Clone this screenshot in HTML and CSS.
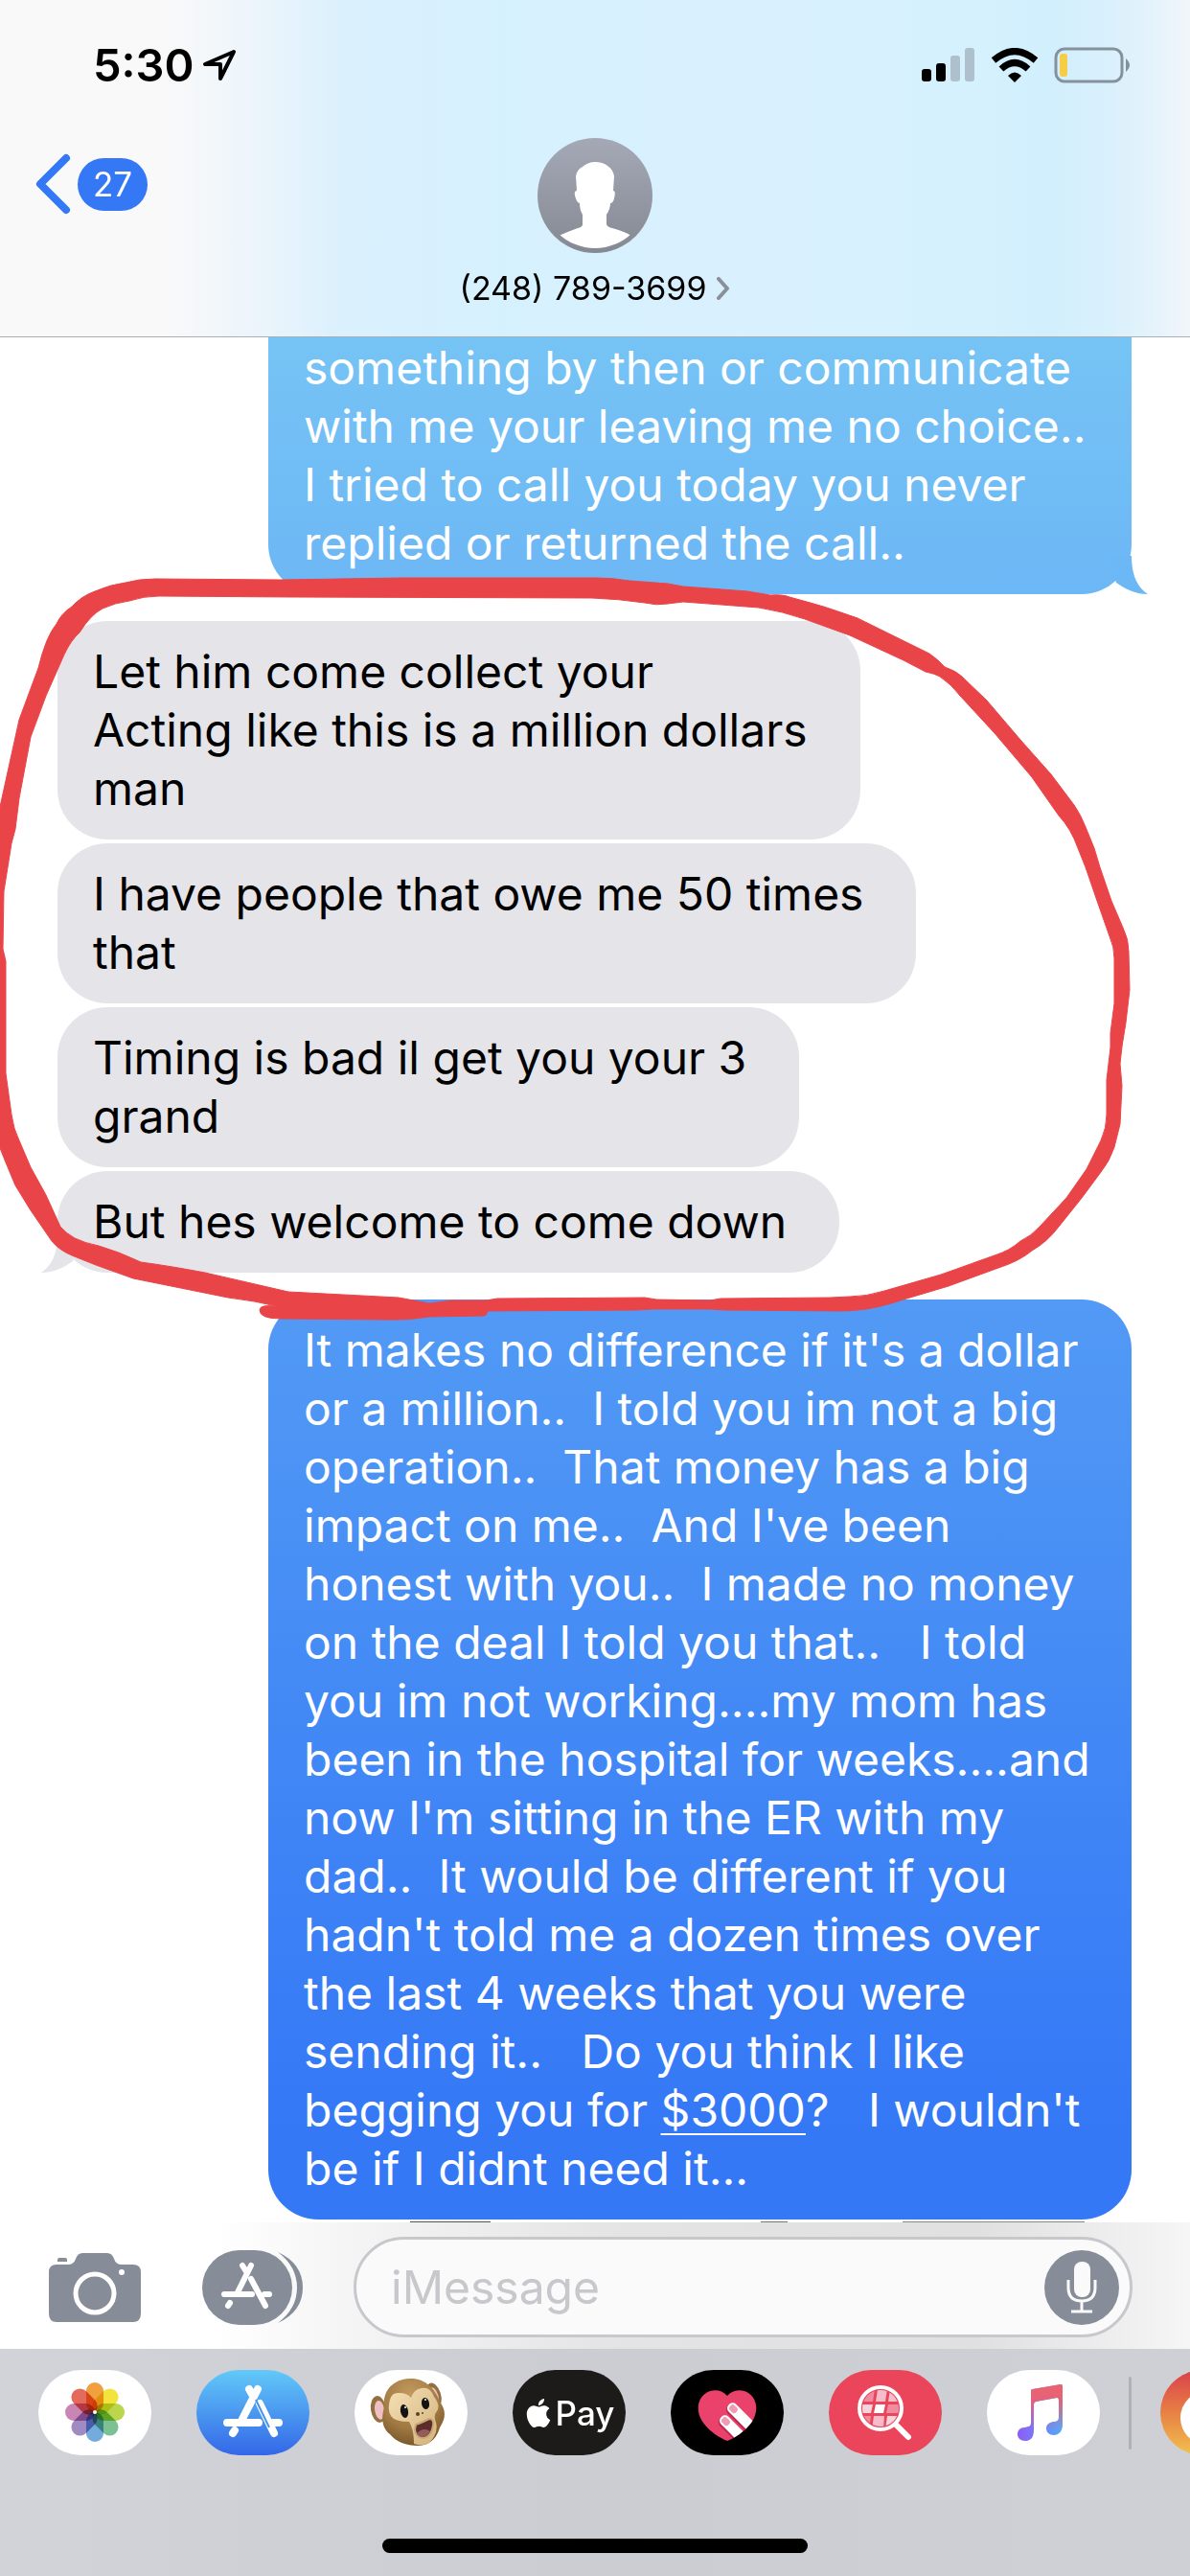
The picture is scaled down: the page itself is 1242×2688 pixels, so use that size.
FILE: index.html
```html
<!DOCTYPE html>
<html lang="en">
<head>
<meta charset="UTF-8">
<meta name="viewport" content="width=device-width, initial-scale=1">
<title>Messages</title>
<link rel="stylesheet" href="styles.css">
</head>
<body>
<header class="header">
	<div class="status">
		<span class="time">5:30</span>
		<svg class="location" width="36" height="34" viewBox="0 0 36 34"><path d="M33 3 L3 16 H19 V31 Z" fill="none" stroke="#000" stroke-width="4" stroke-linejoin="round"/></svg>
		<svg class="signal" width="56" height="36" viewBox="0 0 56 36">
			<rect x="0" y="22" width="10" height="13" rx="3"/>
			<rect x="15" y="16" width="10" height="19" rx="3"/>
			<rect x="30" y="8" width="10" height="27" rx="3" fill="#adc0cc"/>
			<rect x="45" y="0" width="10" height="35" rx="3" fill="#adc0cc"/>
		</svg>
		<svg class="wifi" width="50" height="36" viewBox="0 0 50 36">
			<path d="M3 13 Q25 -6 47 13" fill="none" stroke="#000" stroke-width="7"/>
			<path d="M11 22 Q25 9 39 22" fill="none" stroke="#000" stroke-width="7"/>
			<path d="M18 29 Q25 22 32 29 L25 36 Z"/>
		</svg>
		<svg class="battery" width="80" height="38" viewBox="0 0 80 38">
			<rect x="2" y="2" width="69" height="34" rx="9" fill="none" stroke="#84929c" stroke-width="3"/>
			<rect x="6" y="7" width="8" height="24" rx="3" fill="#f7cd45"/>
			<path d="M75 12 Q83 19 75 26 Z" fill="#84929c"/>
		</svg>
	</div>
	<nav class="nav">
		<a class="back" href="#" aria-label="Back">
			<svg width="38" height="64" viewBox="0 0 38 64"><path d="M33 5 L6 32 L33 59" fill="none" stroke="#3478f6" stroke-width="8" stroke-linecap="round" stroke-linejoin="round"/></svg>
			<span class="unread">27</span>
		</a>
		<a class="contact" href="#">
			<svg width="121" height="121" viewBox="0 0 121 121">
				<defs>
					<linearGradient id="avatarBg" x1="0" y1="0" x2="0" y2="1"><stop offset="0" stop-color="#a5a9b6"/><stop offset="1" stop-color="#858993"/></linearGradient>
					<clipPath id="avatarClip"><circle cx="60" cy="60" r="55"/></clipPath>
				</defs>
				<circle cx="60" cy="60" r="60" fill="url(#avatarBg)"/>
				<path clip-path="url(#avatarClip)" fill="#fff" d="M60 25 C70 25 79 31 80 40 L79 55 Q82 55 80 63 Q79 68 76 68 Q76 74 72 80 V90 Q73 93 78 94 Q92 98 98 102 V121 H22 V102 Q31 98 42 94 Q47 93 47 90 V80 Q44 75 44 68 Q41 68 39 60 Q38 55 41 55 L40 40 Q41 33 47 30 Q53 25 60 25 Z"/>
			</svg>
			<span class="name">(248) 789-3699
				<svg width="15" height="24" viewBox="0 0 15 24"><path d="M3 2 L12 12 L3 22" fill="none" stroke="#8a8f99" stroke-width="4" stroke-linecap="round" stroke-linejoin="round"/></svg>
			</span>
		</a>
	</nav>
</header>

<main class="chat">
	<div class="bubble sent cut"><p class="text">something by then or communicate
with me your leaving me no choice..
I tried to call you today you never
replied or returned the call..</p>
		<svg class="tail tail-right" width="44" height="40" viewBox="0 0 44 40"><path d="M23 0 C23 20 29 33 40 40 C26 40 16 34 7 28 L0 0 Z" fill="#6cb7f5"/></svg>
	</div>
	<div class="group">
		<div class="bubble received"><p class="text">Let him come collect your
Acting like this is a million dollars
man</p></div>
		<div class="bubble received"><p class="text">I have people that owe me 50 times
that</p></div>
		<div class="bubble received"><p class="text">Timing is bad il get you your 3
grand</p></div>
		<div class="bubble received"><p class="text">But hes welcome to come down</p>
			<svg class="tail tail-left" width="44" height="40" viewBox="0 0 44 40"><path d="M21 0 C21 20 15 33 4 40 C18 40 28 34 37 28 L44 0 Z" fill="#e5e4e9"/></svg>
		</div>
	</div>
	<div class="bubble sent long"><p class="text">It makes no difference if it's a dollar
or a million..  I told you im not a big
operation..  That money has a big
impact on me..  And I've been
honest with you..  I made no money
on the deal I told you that..   I told
you im not working....my mom has
been in the hospital for weeks....and
now I'm sitting in the ER with my
dad..  It would be different if you
hadn't told me a dozen times over
the last 4 weeks that you were
sending it..   Do you think I like
begging you for <a class="amount" href="#">$3000</a>?   I wouldn't
be if I didnt need it...</p></div>
	<div class="next"></div>

	<!-- hand drawn ring round the received messages -->
	<svg class="ring" width="1242" height="800" viewBox="0 590 1242 800">
		<path fill="#e94549" fill-rule="evenodd" stroke="#e94549" stroke-width="1" stroke-linejoin="round" d="M-4 860 L0 842 L9 801 L20 751 L40 697 Q48 664 59 651 Q64 640 75 633 Q85 622 99 617 Q115 610 131 608 Q145 604 162 604 L293 605 L420 603 H622 Q640 603 657 606 L697 609 L713 612 L780 617 L804 621 Q817 620 824 623 Q860 632 895 645 L970 682 Q979 688 986 696 Q998 700 1004 706 L1030 731 L1065 772 L1097 808 L1121 840 Q1128 850 1133 863 L1142 885 L1148 905 L1160 940 L1172 968 Q1178 980 1178 993 L1179 1033 L1175 1067 L1171 1092 L1169 1110 L1171 1133 L1169 1173 L1163 1197 Q1158 1212 1149 1223 L1129 1250 L1105 1280 Q1093 1296 1077 1305 Q1064 1316 1042 1323 L990 1342 L943 1356 Q913 1366 895 1367 Q888 1368 879 1368 L756 1367 L741 1366 H681 L665 1367 L509 1368 Q508 1373 505 1373 L448 1374 Q426 1378 404 1377 L293 1376 Q271 1376 271 1367 Q271 1360 293 1364 Q265 1357 238 1354 L139 1334 L100 1320 L75 1310 Q61 1304 54 1295 L32 1263 L16 1237 L6 1213 L0 1198 L-4 1190 Z
		M12 880 L16 865 L20 833 L26 801 L32 769 L48 726 L67 683 Q74 668 83 660 Q95 641 107 635 Q120 629 135 627 Q150 622 166 622 L305 623 L618 624 Q646 625 673 629 Q685 632 697 630 L713 628 L792 634 Q817 638 840 646 L887 663 L943 689 L966 701 Q976 703 981 706 Q993 714 1002 726 L1038 765 L1077 811 L1105 851 Q1118 865 1125 885 L1133 905 L1145 940 L1158 977 Q1163 988 1163 1000 V1047 L1159 1078 V1093 L1155 1127 V1163 Q1155 1177 1149 1190 L1134 1220 L1113 1250 L1085 1280 Q1076 1290 1065 1295 Q1054 1305 1038 1310 L982 1330 L923 1347 Q904 1353 887 1353 L867 1354 L752 1355 L741 1357 L685 1356 L673 1354 L519 1355 L507 1357 H471 L448 1360 L416 1354 L301 1348 L214 1328 Q177 1321 147 1317 Q124 1306 103 1300 Q88 1297 78 1292 Q69 1287 63 1280 L48 1247 L32 1218 L20 1190 Q14 1178 12 1163 L6 1120 V1003 L3 990 L4 930 Z"/>
	</svg>
</main>

<form class="composer">
	<button class="tool" type="button" aria-label="Camera">
		<svg width="96" height="72" viewBox="0 0 96 72">
			<path fill="#878d98" d="M9 9 V7 Q9 5 11 5 H17 Q19 5 19 7 V9 Z"/>
			<path fill="#878d98" d="M8 12 H20 Q26 12 28 6 Q30 0 35 0 H61 Q66 0 68 6 Q70 12 76 12 H88 Q96 12 96 20 V63 Q96 72 88 72 H8 Q0 72 0 63 V20 Q0 12 8 12 Z"/>
			<circle cx="48" cy="42" r="20" fill="none" stroke="#fff" stroke-width="5"/>
			<circle cx="76" cy="20" r="3" fill="#fff"/>
		</svg>
	</button>
	<button class="tool" type="button" aria-label="Apps">
		<svg width="105" height="78" viewBox="0 0 105 78">
			<rect width="94" height="78" rx="39" fill="#878d98"/>
			<path fill="#878d98" d="M79 2 Q105 14 105 39 Q105 64 79 76 Q99 61 99 39 Q99 17 79 2 Z"/>
			<g fill="none" stroke="#fff" stroke-width="6" stroke-linecap="round">
				<path d="M51 16 L37 44 M42 16 L47 24 M23 46 H52 M65 46 H70 M51 30 L66 58 M29 55 L27 58"/>
			</g>
		</svg>
	</button>
	<div class="field">
		<input class="input" type="text" placeholder="iMessage" aria-label="iMessage">
		<button class="mic" type="button" aria-label="Dictate">
			<svg width="78" height="78" viewBox="0 0 78 78">
				<circle cx="39" cy="39" r="39" fill="#878d98"/>
				<rect x="31" y="12" width="17" height="37" rx="8" fill="#fafafa"/>
				<path d="M25 31 V39 Q25 53 39 53 Q53 53 53 39 V31 M39 53 V65 M28 64 H50" fill="none" stroke="#fafafa" stroke-width="3"/>
			</svg>
		</button>
	</div>
</form>

<footer class="drawer">
	<div class="apps">
		<button class="app white" type="button" aria-label="Photos">
			<svg width="118" height="89" viewBox="0 0 118 89">
				<g class="petals" transform="translate(59 44)">
					<rect x="-9" y="-31" width="18" height="31" rx="9" fill="#f0a03c"/>
					<rect x="-9" y="-31" width="18" height="31" rx="9" fill="#f2e33e" transform="rotate(45)"/>
					<rect x="-9" y="-31" width="18" height="31" rx="9" fill="#b9d64c" transform="rotate(90)"/>
					<rect x="-9" y="-31" width="18" height="31" rx="9" fill="#7cc191" transform="rotate(135)"/>
					<rect x="-9" y="-31" width="18" height="31" rx="9" fill="#72abdc" transform="rotate(180)"/>
					<rect x="-9" y="-31" width="18" height="31" rx="9" fill="#a08ac4" transform="rotate(225)"/>
					<rect x="-9" y="-31" width="18" height="31" rx="9" fill="#c985b4" transform="rotate(270)"/>
					<rect x="-9" y="-31" width="18" height="31" rx="9" fill="#e46b5c" transform="rotate(315)"/>
				</g>
				<circle cx="59" cy="44" r="2" fill="#fff"/>
			</svg>
		</button>
		<button class="app store" type="button" aria-label="App Store">
			<svg width="118" height="89" viewBox="0 0 118 89">
				<path d="M64 20 L48 51 M55 20 L59 27 M32 55 H65 M80 55 H86 M66 35 L81 66 M40 63 L38 66" fill="none" stroke="#fff" stroke-width="8" stroke-linecap="round"/>
				<path d="M62 31 L76 60" fill="none" stroke="#4794ef" stroke-width="2"/>
			</svg>
		</button>
		<button class="app white" type="button" aria-label="Animoji">
			<svg width="118" height="89" viewBox="0 0 118 89">
				<defs>
					<radialGradient id="fur" cx=".45" cy=".25" r=".8"><stop offset="0" stop-color="#c39a5e"/><stop offset=".6" stop-color="#a17a43"/><stop offset="1" stop-color="#735226"/></radialGradient>
					<linearGradient id="skin" x1="0" y1="0" x2="1" y2="1"><stop offset="0" stop-color="#f5e0b5"/><stop offset="1" stop-color="#d3b27c"/></linearGradient>
				</defs>
				<g transform="rotate(-8 25 41)"><ellipse cx="25" cy="41" rx="8" ry="14" fill="#92703f"/><ellipse cx="26" cy="42" rx="5" ry="10" fill="#efbfc4"/></g>
				<g transform="rotate(-18 83 26)"><ellipse cx="83" cy="26" rx="7" ry="13" fill="#92703f"/><ellipse cx="83" cy="27" rx="4" ry="9" fill="#efbfc4"/></g>
				<path fill="url(#fur)" d="M57 9 C73 8 84 19 89 33 C97 44 94 52 89 60 C85 74 76 79 66 79 C54 79 43 75 37 67 C28 60 28 49 31 39 C29 22 40 10 57 9 Z"/>
				<path fill="url(#skin)" d="M37 31 Q39 23 47 24 Q55 24 59 29 Q62 20 70 19 Q79 17 83 28 Q90 37 86 43 Q82 47 85 55 Q88 66 78 76 Q70 80 62 77 Q62 62 57 54 Q42 54 38 48 Q34 42 37 31 Z"/>
				<ellipse cx="52" cy="43" rx="4" ry="7" fill="#141414" transform="rotate(-10 52 43)"/>
				<ellipse cx="74" cy="35" rx="4" ry="6" fill="#141414" transform="rotate(-10 74 35)"/>
				<circle cx="53" cy="39" r="1" fill="#fff"/><circle cx="74" cy="31" r="1" fill="#fff"/>
				<circle cx="66" cy="46" r="2" fill="#5e4021"/><circle cx="71" cy="45" r="1" fill="#5e4021"/>
				<path fill="#5c2b2b" stroke="#c9a874" stroke-width="2" d="M64 57 Q70 55 78 51 Q83 51 82 58 Q80 70 72 71 Q64 71 63 62 Z"/>
				<path fill="#955a5a" d="M65 66 Q72 59 79 64 Q75 71 70 70 Q67 70 65 66 Z"/>
			</svg>
		</button>
		<button class="app pay" type="button">
			<svg width="30" height="30" viewBox="0 0 24 24" fill="#fff"><path d="M12.152 6.896c-.948 0-2.415-1.078-3.96-1.04-2.04.027-3.91 1.183-4.961 3.014-2.117 3.675-.546 9.103 1.519 12.09 1.013 1.454 2.208 3.09 3.792 3.039 1.52-.065 2.09-.987 3.935-.987 1.831 0 2.35.987 3.96.948 1.637-.026 2.676-1.48 3.676-2.948 1.156-1.688 1.636-3.325 1.662-3.415-.039-.013-3.182-1.221-3.22-4.857-.026-3.04 2.48-4.494 2.597-4.559-1.429-2.09-3.623-2.324-4.39-2.376-2-.156-3.675 1.09-4.61 1.09zM15.53 3.83c.843-1.012 1.4-2.427 1.245-3.83-1.207.052-2.662.805-3.532 1.818-.78.896-1.454 2.338-1.273 3.714 1.338.104 2.715-.688 3.559-1.701"/></svg>
			<span>Pay</span>
		</button>
		<button class="app touch" type="button" aria-label="Digital Touch">
			<svg width="118" height="89" viewBox="0 0 118 89">
				<defs><clipPath id="heart"><path d="M59 27 C53 20 43 20 37 24 C28 30 27 41 31 50 C36 61 49 70 59 74 C69 70 82 61 87 50 C91 41 90 30 81 24 C75 20 65 20 59 27 Z"/></clipPath></defs>
				<g clip-path="url(#heart)">
					<rect width="118" height="89" fill="#ea426b"/>
					<g transform="translate(64 40) rotate(-45)">
						<rect x="-7" y="-5" width="12" height="50" rx="6" fill="#b92a50"/>
						<rect x="-5" y="-5" width="11" height="50" rx="5" fill="#fff"/>
						<rect x="-3" y="-3" width="7" height="9" rx="3" fill="#f09ab4"/>
					</g>
					<g transform="translate(56 53) rotate(-45)">
						<rect x="-7" y="-5" width="12" height="50" rx="6" fill="#b92a50"/>
						<rect x="-5" y="-5" width="11" height="50" rx="5" fill="#fff"/>
						<rect x="-3" y="-3" width="7" height="9" rx="3" fill="#f09ab4"/>
					</g>
				</g>
			</svg>
		</button>
		<button class="app images" type="button" aria-label="Images">
			<svg width="118" height="89" viewBox="0 0 118 89">
				<defs><clipPath id="lens"><circle cx="54" cy="40" r="19"/></clipPath></defs>
				<g clip-path="url(#lens)">
					<path fill="#f08ba0" d="M34 20 H48 L46 33 H34 Z M62 36 H74 V45 H60 Z M34 48 H44 L42 62 H34 Z"/>
					<path fill="#f6bcc9" d="M51 20 H61 L59 33 H49 Z M47 48 H58 L57 62 H45 Z M64 20 H76 V33 H62 Z"/>
					<path fill="#f9d3dc" d="M34 36 H46 L44 45 H34 Z M61 48 H74 V62 H59 Z"/>
					<path fill="#fff" d="M49 36 H59 L57 45 H47 Z"/>
				</g>
				<circle cx="54" cy="40" r="22" fill="none" stroke="#fff" stroke-width="4"/>
				<path d="M70 57 L83 70" stroke="#fff" stroke-width="6" stroke-linecap="round"/>
			</svg>
		</button>
		<button class="app white" type="button" aria-label="Music">
			<svg width="118" height="89" viewBox="0 0 118 89">
				<defs>
					<linearGradient id="note" x1="0" y1="0" x2="1" y2="0"><stop offset="0" stop-color="#8e5cf7"/><stop offset="1" stop-color="#55a9f8"/></linearGradient>
					<linearGradient id="beam" x1="0" y1="0" x2="0" y2="1"><stop offset="0" stop-color="#f0626c"/><stop offset=".3" stop-color="#e0637c"/><stop offset=".8" stop-color="#e0637c" stop-opacity="0"/></linearGradient>
				</defs>
				<path fill="url(#note)" d="M48 20 L77 15 Q79 15 79 17 V57 C79 64 75 68 70 68 C65 68 62 65 62 61 C62 57 65 55 69 54 C73 54 75 53 75 49 V31 Q75 29 73 29 L51 33 Q49 34 49 36 V63 C49 70 46 74 40 74 C35 74 32 71 32 67 C32 63 35 60 39 60 C44 59 46 59 46 55 V22 Q46 20 48 20 Z"/>
				<path fill="url(#beam)" d="M48 20 L77 15 Q79 15 79 17 V57 C79 64 75 68 70 68 C65 68 62 65 62 61 C62 57 65 55 69 54 C73 54 75 53 75 49 V31 Q75 29 73 29 L51 33 Q49 34 49 36 V63 C49 70 46 74 40 74 C35 74 32 71 32 67 C32 63 35 60 39 60 C44 59 46 59 46 55 V22 Q46 20 48 20 Z"/>
			</svg>
		</button>
		<span class="divider"></span>
		<button class="app more" type="button" aria-label="Activity">
			<svg width="118" height="89" viewBox="0 0 118 89"><circle cx="49" cy="50" r="28" fill="#fff"/></svg>
		</button>
	</div>
	<div class="home"></div>
</footer>
</body>
</html>
```
FILE: styles.css
```css
*{
	box-sizing: border-box;
}
body{
	margin: 0;
	min-height: 100vh;
	display: flex;
	flex-direction: column;
	overflow-x: hidden;
	background: #fff;
	color: #000;
	font-family: Inter, "Liberation Sans", sans-serif;
}
svg{
	display: block;
	flex: none;
}
button{
	border: 0;
	padding: 0;
	background: none;
	font: inherit;
}
a{
	color: inherit;
	text-decoration: none;
}

/* header */
.header{
	height: 352px;
	border-bottom: 1px solid #a9b0b3;
	background: linear-gradient(90deg, #f9f9f9 14%, #edf5fb 21%, #daf0fd 29%, #d8f0fe 36%, #d6f1fe 42%, #d9f0fe 62%, #d5f1fe 82%, #d2effd 88%, #d8f0fc 93%, #e5f3fb 97%, #f1f6fa);
}
.status{
	display: flex;
	align-items: center;
	height: 136px;
	padding: 0 62px 0 97px;
}
.time{
	font-size: 47px;
	font-weight: 600;
	line-height: 60px;
}
.location{
	margin: 0 auto 0 9px;
}
.wifi{
	margin: 0 16px;
}
.nav{
	display: grid;
	grid-template-columns: 1fr auto 1fr;
	align-items: start;
	padding: 8px 36px 0;
}
.back{
	display: flex;
	align-items: center;
	gap: 7px;
	padding-top: 16px;
}
.unread{
	width: 73px;
	border-radius: 28px;
	background: #3478f6;
	color: #fff;
	font-size: 35px;
	line-height: 55px;
	text-align: center;
}
.contact{
	display: flex;
	flex-direction: column;
	align-items: center;
	gap: 16px;
}
.name{
	display: flex;
	align-items: center;
	gap: 10px;
	font-size: 34px;
	line-height: 40px;
}

/* messages */
.chat{
	position: relative;
	flex: 1;
	display: flex;
	flex-direction: column;
	gap: 28px;
	padding: 0 61px 0 60px;
	overflow: hidden;
}
.group{
	display: flex;
	flex-direction: column;
	gap: 4px;
}
.bubble{
	position: relative;
	padding: 22px 37px 23px;
	border-radius: 52px;
	font-size: 48px;
	line-height: 61px;
}
.text{
	margin: 0;
	white-space: pre;
}
.received{
	width: fit-content;
	padding-right: 55px;
	background: #e5e4e9;
}
.sent{
	margin-left: 220px;
	color: #fff;
}
.cut{
	padding-top: 1px;
	border-radius: 0 0 52px 52px;
	background: linear-gradient(#76c3f5, #6cb7f5);
}
.long{
	background: linear-gradient(#529af5, #3478f6 90%);
}
.tail{
	position: absolute;
	bottom: 0;
}
.tail-right{
	right: -21px;
}
.tail-left{
	left: -21px;
}
.amount{
	text-decoration: underline;
	text-decoration-thickness: 2px;
	text-underline-offset: 7px;
}
.next{
	height: 1px;
	margin: -26px 49px 0 368px;
	background: linear-gradient(90deg, #555 0 12%, transparent 12% 52%, #777 52% 56%, transparent 56% 73%, #888 73%);
}
.ring{
	position: absolute;
	top: 238px;
	left: 0;
}

/* message box */
.composer{
	display: flex;
	align-items: center;
	padding: 15px 60px 12px 51px;
	background: linear-gradient(90deg, #fff 18%, #f4f4f4 30%, #e4e4e4 52%, #e0e0e0 82%, #ececec 92%, #f6f6f6);
}
.tool{
	margin-right: 64px;
}
.tool + .tool{
	margin-right: 53px;
}
.field{
	flex: 1;
	min-width: 0;
	display: flex;
	align-items: center;
	height: 105px;
	padding: 0 11px 0 36px;
	border: 3px solid #c7c7cc;
	border-radius: 53px;
	background: #fafafa;
}
.input{
	flex: 1;
	min-width: 0;
	padding: 0;
	border: 0;
	outline: 0;
	background: none;
	font: inherit;
	font-size: 48px;
}
.input::placeholder{
	color: #c7c7cc;
	opacity: 1;
}

/* app drawer */
.drawer{
	display: flex;
	flex-direction: column;
	align-items: center;
	justify-content: space-between;
	height: 237px;
	padding: 22px 0 24px;
	background: linear-gradient(90deg, #d2d3d8, #cccdd3 50%, #cfd0d5);
}
.apps{
	display: flex;
	align-items: center;
	align-self: stretch;
	gap: 47px;
	padding-left: 40px;
	overflow: hidden;
}
.app{
	flex: none;
	display: flex;
	align-items: center;
	justify-content: center;
	width: 118px;
	height: 89px;
	border-radius: 45px;
	overflow: hidden;
}
.white{
	background: #fff;
}
.petals rect{
	mix-blend-mode: multiply;
}
.store{
	background: linear-gradient(#62c9f8, #3367e8);
}
.pay{
	gap: 3px;
	background: #1c1b19;
	color: #fff;
	font-size: 35px;
	font-weight: 500;
}
.touch{
	background: #000;
}
.images{
	background: #ea455b;
}
.divider{
	flex: none;
	width: 3px;
	height: 76px;
	margin: 0 -17px;
	border-radius: 2px;
	background: #b0b1b6;
}
.more{
	background: linear-gradient(#d93f4b, #e78145 50%, #f2c14e);
}
.home{
	width: 444px;
	height: 15px;
	border-radius: 8px;
	background: #000;
}
```
